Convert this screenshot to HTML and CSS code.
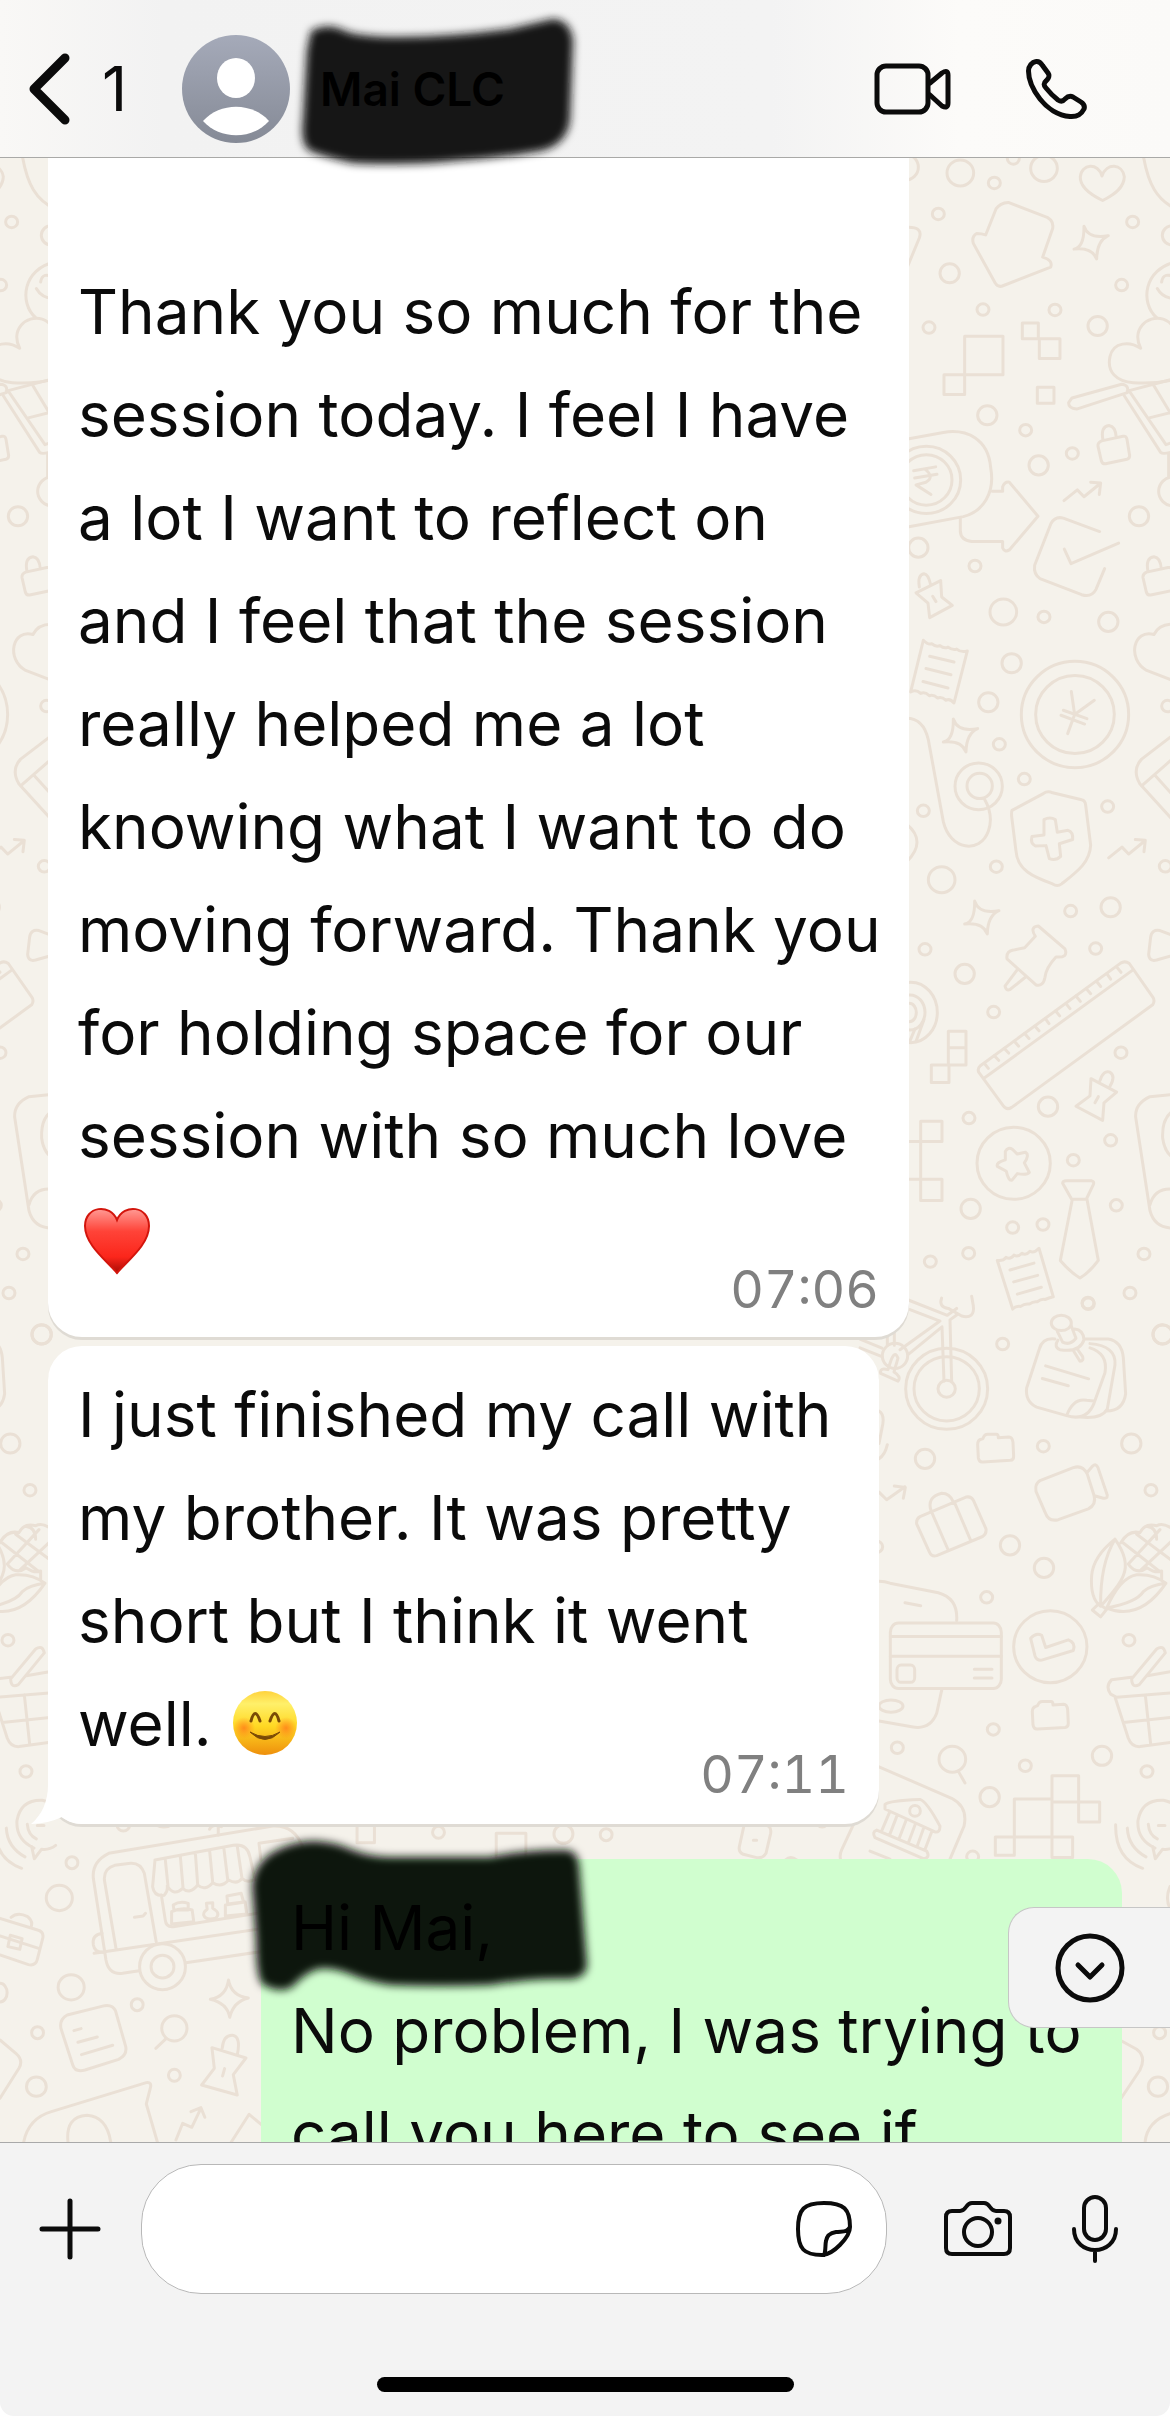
FILE: index.html
```
<!DOCTYPE html>
<html lang="en">
<head>
  <meta charset="UTF-8">
  <meta name="viewport" content="width=device-width, initial-scale=1.0">
  <title>Chat</title>
  <link rel="stylesheet" href="styles.css">
</head>
<body>

<!-- HEADER -->
<header class="topbar">
  <button class="back" aria-label="Back">
    <svg width="48" height="76" viewBox="26 49 48 76"><path d="M65 56L34 87L65 118" stroke-width="9"/></svg>
    <span>1</span>
  </button>
  <svg class="avatar" viewBox="0 0 108 108">
    <defs>
      <linearGradient id="avatar-bg" x1="0" y1="0" x2="0" y2="1">
        <stop offset="0" stop-color="#a5aab9"/>
        <stop offset="1" stop-color="#858a96"/>
      </linearGradient>
    </defs>
    <circle cx="54" cy="54" r="54" fill="url(#avatar-bg)"/>
    <ellipse cx="54" cy="43" rx="19" ry="20" fill="#fff"/>
    <path d="M21 86C38 67 70 67 87 86C70 105 38 105 21 86Z" fill="#fff"/>
  </svg>
  <div class="contact">
    <svg class="scribble scribble-name" width="300" height="170" viewBox="290 10 300 170">
      <defs><filter id="soft"><feGaussianBlur stdDeviation="4"/></filter></defs>
      <path filter="url(#soft)" d="M311 31Q328 22 345 31Q360 37 400 37Q450 37 510 29Q540 22 553 19Q570 20 573 40L570 120Q567 145 540 151Q500 158 430 163Q380 165 352 163Q325 157 310 151Q300 145 303 120L307 50Z"/>
    </svg>
    <h1 class="name">Mai CLC</h1>
  </div>
  <div class="calls">
    <button aria-label="Video call">
      <svg width="80" height="60" viewBox="872 58 80 60">
        <rect x="877" y="65" width="51" height="46" rx="9" stroke-width="5"/>
        <path d="M930 82L942 72Q948 68 948 74V102Q948 108 942 105L930 94" stroke-width="5"/>
      </svg>
    </button>
    <button aria-label="Call">
      <svg width="64" height="64" viewBox="1024 56 64 64">
        <path stroke-width="5" d="M1028.500 70C1028.500 65 1032 61 1036 60.500C1039 60 1041 62 1042.500 64.500L1048 72C1050 75 1049 77 1046 80C1043.500 82 1043.500 84 1046 87C1050 92 1054 96 1058 99C1061 101 1063 100.500 1065 98C1068 95 1070 94.500 1073 96L1081 101C1084 103 1085 105 1084 108C1081 114 1076 116 1070 115.500C1058 114.500 1047 107 1040 98C1033 89 1028.500 80 1028.500 70Z"/>
      </svg>
    </button>
  </div>
</header>

<!-- CHAT -->
<main class="chat">
  <svg class="wallpaper" viewBox="0 158 1170 1984" preserveAspectRatio="xMidYMin slice" aria-hidden="true">
    <defs>
      <ellipse id="s" rx="18" ry="15"/>
      <ellipse id="m" rx="29" ry="25"/>
      <ellipse id="l" rx="40" ry="34"/>
      <path id="star" d="M-23 -43Q-10 -8 50 -18Q16 -5 15 43Q2 12 -53 17Q-22 12 -23 -43Z"/>
      <path id="lock" d="M-32 -10L32 -22Q42 -24 44 -14L52 28Q52 36 44 38L-20 50Q-30 51 -33 42L-43 4Q-44 -6 -32 -10ZM-28 -12Q-36 -48 -10 -50Q10 -48 12 -18"/>
      <path id="trend" d="M-58 22L-18 -6L2 12L50 -22M22 -26L52 -24L48 6"/>
      <path id="folder" d="M-38 -26Q-34 -37 -24 -37H2Q8 -37 8 -28L40 -30Q50 -30 52 -16L54 20Q54 30 44 31L-38 35Q-50 36 -52 24L-54 -10Q-54 -22 -44 -24Z"/>
    </defs>

    <g id="right-side">
      <!-- upper part -->
      <g transform="translate(880 150) scale(.3333 .3827)">
        <use href="#l" x="75" y="45"/><use href="#l" x="241" y="60"/><use href="#l" x="492" y="48"/><use href="#l" x="370" y="1207"/>
        <use href="#s" x="343" y="86"/><use href="#s" x="400" y="22"/><use href="#s" x="175" y="167"/><use href="#s" x="758" y="188"/>
        <use href="#s" x="725" y="353"/><use href="#s" x="309" y="417"/><use href="#s" x="525" y="418"/><use href="#s" x="147" y="464"/>
        <use href="#s" x="437" y="732"/><use href="#s" x="577" y="793"/><use href="#s" x="285" y="1087"/><use href="#s" x="492" y="1220"/>
        <use href="#s" x="358" y="1553"/><use href="#s" x="863" y="1453"/>
        <use href="#m" x="209" y="322"/><use href="#m" x="653" y="460"/><use href="#m" x="322" y="693"/><use href="#m" x="476" y="824"/>
        <use href="#m" x="777" y="957"/><use href="#m" x="115" y="1039"/><use href="#m" x="685" y="1233"/><use href="#m" x="395" y="1341"/>
        <use href="#m" x="325" y="1443"/><use href="#m" x="876" y="223"/>
        <path d="M668 132C620 112 600 92 601 70C604 36 655 32 666 68C680 32 728 36 733 70C732 96 710 114 668 132Z"/>
        <path d="M790 15C805 90 830 130 890 155"/>
        <path d="M80 202Q130 200 118 230L80 310"/>
        <path d="M317 222L348 154Q360 138 385 137L490 172Q523 180 518 205L488 280Q520 288 512 306L365 356Q352 358 346 348L280 244Q274 226 290 218Q305 218 317 222Z"/>
        <use href="#star" x="635" y="242"/>
        <use href="#star" x="243" y="1530"/>
        <path d="M254 487H369V587H254ZM192 587H254V639H192ZM427 452H475V493H427ZM478 493H540V545H478ZM472 620H522V662H472Z"/>
        <path d="M83 755L190 738C260 728 325 755 332 830C346 895 310 945 250 958L83 985"/>
        <ellipse cx="139" cy="862" rx="103" ry="88"/><ellipse cx="139" cy="862" rx="77" ry="66"/>
        <path d="M101 838L167 828M104 857L171 847M135 834Q165 855 138 868L108 875L153 900"/>
        <path d="M337 892H368V880Q374 866 388 868L474 957L388 1045Q374 1052 368 1040V1023H275Q242 1020 241 996V962"/>
        <path d="M659 997L550 962Q526 956 513 976L464 1085Q460 1108 480 1120L605 1162Q635 1170 648 1148L674 1094M553 1043L573 1081L716 1027"/>
        <path d="M830 438C780 400 790 310 890 292M890 335Q850 315 845 345M832 362Q850 390 890 388"/>
        <path d="M782 518C755 470 800 430 850 442Q890 455 890 500M782 518C750 500 700 500 690 540C680 580 710 605 760 608Q830 612 890 598"/>
        <path d="M576 648L725 612Q748 614 742 634L590 677Q565 675 566 660ZM742 630L890 596M733 642L842 790Q850 797 890 785M748 630L858 770L890 760M822 616L880 700M808 700L890 682M866 794V855"/>
        <ellipse cx="880" cy="892" rx="44" ry="38"/>
        <use href="#lock" x="697" y="770"/><use href="#lock" x="832" y="1113"/>
        <use href="#trend" x="610" y="894"/>
        <path d="M108 1157L182 1125L185 1168L217 1190L149 1222L144 1184ZM118 1142Q112 1110 132 1107Q145 1108 152 1136M158 1166L168 1180"/>
        <path d="M130 1281Q145 1294 155 1290Q168 1300 180 1295Q192 1304 204 1299Q218 1308 230 1304Q244 1314 262 1309L222 1445Q210 1432 198 1438Q185 1428 173 1432Q160 1422 148 1426Q135 1415 122 1420Q108 1408 92 1416ZM149 1323L222 1338M138 1355L213 1371M129 1389L204 1406"/>
        <ellipse cx="585" cy="1475" rx="161" ry="139"/><ellipse cx="585" cy="1475" rx="118" ry="102"/>
        <path d="M574 1415L584 1475L643 1438M584 1475L563 1525M550 1464L621 1486M543 1477L614 1500"/>
        <path d="M890 1390L800 1360C740 1330 760 1250 822 1266Q840 1235 890 1240"/>
        <path d="M80 1485Q130 1485 145 1541L190 1755C210 1830 300 1840 325 1780Q342 1740 313 1695"/>
      </g>

      <!-- middle part -->
      <g transform="translate(880 740) scale(.3333 .3827)">
        <use href="#s" x="433" y="102"/><use href="#s" x="683" y="174"/><use href="#s" x="130" y="185"/><use href="#s" x="349" y="331"/>
        <use href="#s" x="856" y="330"/><use href="#s" x="572" y="447"/><use href="#s" x="135" y="547"/><use href="#s" x="647" y="545"/>
        <use href="#s" x="341" y="711"/><use href="#s" x="723" y="817"/><use href="#s" x="267" y="988"/><use href="#s" x="692" y="1046"/>
        <use href="#s" x="580" y="1098"/><use href="#s" x="709" y="1216"/><use href="#s" x="398" y="1274"/><use href="#s" x="489" y="1266"/>
        <use href="#s" x="266" y="1341"/><use href="#s" x="151" y="1363"/><use href="#s" x="792" y="1343"/><use href="#s" x="750" y="1445"/><use href="#s" x="624" y="1471"/>
        <use href="#m" x="692" y="437"/><use href="#m" x="254" y="611"/><use href="#m" x="504" y="958"/><use href="#m" x="272" y="1225"/>
        <use href="#m" x="848" y="1553"/><use href="#l" x="185" y="365"/>
        <ellipse cx="296" cy="121" rx="71" ry="61"/><ellipse cx="299" cy="120" rx="38" ry="33"/>
        <path d="M80 220Q142 265 80 318"/>
        <path d="M396 184L490 140Q503 132 518 138L605 156Q616 158 617 170L632 275C630 320 590 345 545 376Q532 384 518 376C460 358 412 340 408 290L395 200Q394 188 396 184Z"/>
        <path d="M492 208Q510 200 526 208L532 241L564 236Q580 240 578 260L538 271L542 304Q528 316 508 310L498 276L466 277Q450 270 456 252L492 248Z"/>
        <use href="#trend" x="744" y="286"/><use href="#star" x="307" y="464"/>
        <path d="M890 -20L785 50Q755 78 780 115L890 220M785 120L890 40M825 92L890 155"/>
        <path d="M466 513Q448 488 475 486L555 546Q566 570 528 567Q498 595 495 620Q490 645 468 640L381 572Q378 552 400 549L434 543ZM412 600L375 643Q378 656 390 652L436 620"/>
        <path d="M722 583Q735 576 748 584L820 674Q825 684 818 692L395 960Q380 968 370 956L296 868Q292 858 300 852ZM312 884L757 602"/>
        <path d="M314 846L325 858M343 825L356 837M373 806L386 818M403 787L416 800M434 767L447 780M465 748L477 760M496 728L507 741M527 708L539 721M558 689L570 702M588 669L601 683M619 650L632 663M650 631L662 644M681 611L692 625M711 594L723 607"/>
        <path d="M870 508L840 498Q815 494 812 515L806 560Q808 580 830 575L870 565"/>
        <ellipse cx="92" cy="712" rx="80" ry="79"/><ellipse cx="90" cy="712" rx="45" ry="46"/><ellipse cx="88" cy="712" rx="21" ry="24"/><path d="M132 730L108 788M105 755L88 790"/>
        <path d="M205 761H258V849H205ZM205 804H258M154 849H207V895H154ZM122 996H186V1049H80M122 996V1203H186V1148H80"/>
        <path d="M633 885L710 920L672 948L668 994L588 957L630 930ZM660 890Q670 862 690 868Q708 878 690 905M655 932L645 948"/>
        <ellipse cx="401" cy="1106" rx="110" ry="94"/>
        <path d="M376 1075Q384 1062 398 1070L412 1082L436 1077Q450 1084 433 1105L448 1130Q440 1138 412 1133L396 1150Q386 1154 379 1127L352 1114Q348 1104 376 1097Z"/>
        <path d="M890 925L810 932Q765 950 767 985L810 1230Q825 1280 890 1275M810 1215Q825 1165 890 1175M890 965Q845 980 848 1040Q855 1085 890 1095"/>
        <path d="M548 1158Q548 1152 560 1152H635Q644 1154 640 1162L619 1200H575ZM577 1200L541 1360Q570 1390 600 1406Q630 1390 655 1360L621 1200"/>
        <path d="M352 1360Q370 1362 378 1352Q392 1358 402 1346Q414 1352 426 1341Q438 1348 450 1336Q462 1342 477 1328L520 1455Q506 1458 495 1462Q484 1460 472 1468Q460 1466 448 1474Q434 1472 422 1480Q408 1478 398 1487ZM390 1385L462 1367M401 1416L473 1399M412 1448L484 1430"/>
      </g>

      <!-- lower part -->
      <g transform="translate(860 1300) scale(.3333 .3827)">
        <use href="#s" x="685" y="10"/><use href="#s" x="428" y="115"/><use href="#s" x="550" y="382"/><use href="#s" x="873" y="497"/>
        <use href="#s" x="50" y="645"/><use href="#s" x="380" y="777"/><use href="#s" x="807" y="889"/><use href="#s" x="400" y="1122"/>
        <use href="#s" x="112" y="1170"/><use href="#s" x="496" y="1217"/><use href="#s" x="861" y="1232"/><use href="#s" x="338" y="1455"/>
        <use href="#m" x="908" y="90"/><use href="#m" x="195" y="415"/><use href="#m" x="814" y="375"/><use href="#m" x="450" y="641"/>
        <use href="#m" x="552" y="700"/><use href="#m" x="726" y="1191"/><use href="#m" x="389" y="1299"/>
        <ellipse cx="260" cy="232" rx="123" ry="106"/><ellipse cx="260" cy="232" rx="98" ry="84"/><ellipse cx="260" cy="232" rx="26" ry="22"/>
        <path d="M252 212L246 70L145 142M275 212L270 52L292 38M145 0L262 40L290 22M0 102L66 126M0 125L66 148M240 55L120 130M150 25L240 55M82 95V118M103 80V118"/>
        <ellipse cx="105" cy="146" rx="38" ry="33"/>
        <path d="M92 160Q105 130 114 152L102 188Q125 200 114 212L62 192Q58 176 84 182ZM245 -5Q235 18 265 22L305 42Q345 50 340 15L335 -10"/>
        <path d="M585 102Q548 98 538 128L500 230Q495 265 530 280L620 302Q680 318 702 270L735 190Q745 140 690 125M675 102H745Q785 108 790 150L797 245Q790 290 740 290M690 114Q770 120 765 170L742 285Q725 312 660 306M620 302Q640 255 680 262L702 264M557 172L686 206M547 205L625 224"/>
        <ellipse cx="604" cy="60" rx="30" ry="20"/><path d="M592 82L608 110Q630 120 648 100L634 68M594 105Q580 122 600 130Q660 138 672 104Q670 78 644 76M640 132L660 160Q672 160 668 148L652 128"/>
        <use href="#folder" x="407" y="388"/><use href="#folder" x="571" y="1086"/>
        <path d="M540 472L640 438Q668 430 682 455L702 510Q710 535 685 546L595 574Q565 580 556 556L528 500Q524 480 540 472ZM680 452L698 434Q708 426 714 438L742 510Q742 520 730 518L706 512"/>
        <path d="M180 566L318 515Q334 512 341 525L378 598Q380 612 368 618L230 668Q215 672 208 658L170 585Q168 572 180 566ZM216 556L264 652M284 530L332 628M213 550Q200 515 245 505Q270 505 280 528"/>
        <path d="M57 735Q75 735 90 740L235 765Q295 780 290 838M135 791L182 799M57 1100L155 1115Q210 1125 230 1080L245 1020M57 415Q75 405 82 378M57 290Q76 300 66 335L57 375M57 502L80 522L135 488M103 486L136 490L130 518"/>
        <rect x="91" y="844" width="333" height="171" rx="24"/><path d="M91 879H424M91 931H424M343 965H396M343 988H396"/><rect x="111" y="954" width="53" height="45" rx="12"/>
        <ellipse cx="93" cy="1061" rx="36" ry="16"/>
        <ellipse cx="571" cy="906" rx="110" ry="94"/><path d="M512 884Q528 868 545 876L557 908L625 888Q648 895 640 916L545 941Q530 942 525 930Z"/>
        <path d="M722 800Q690 780 695 720Q700 670 765 625Q810 680 790 720Q780 745 722 800ZM722 800Q720 690 765 625M740 805Q780 725 830 718Q880 715 918 740Q840 840 740 805ZM740 805Q830 790 850 762Q870 745 918 740M697 810L716 794L740 808L722 828Z"/>
        <path d="M782 635Q805 600 840 608Q855 582 890 590Q910 580 940 600M790 635L900 710M830 612L935 680M805 690L900 600M840 708L935 630M805 690Q830 720 862 700Q888 715 905 708V730M862 592Q890 595 890 625"/>
        <path d="M820 985L755 992Q735 1010 752 1030L770 1038L940 1026M862 982L940 970M766 1040L805 1145Q815 1168 840 1167L940 1155M790 1104L940 1090M856 1032L872 1160M815 990L890 912Q910 900 916 922L838 1005Q815 1015 815 990Z"/>
        <ellipse cx="277" cy="1200" rx="40" ry="34"/><path d="M296 1233L315 1262"/>
        <path d="M57 1220L275 1302Q325 1325 312 1375L270 1461"/>
        <path d="M75 1318Q85 1308 180 1305Q200 1310 240 1375Q240 1392 225 1390L75 1330ZM50 1385L200 1440Q212 1458 190 1460L45 1405Q35 1390 50 1385ZM88 1340L66 1385M110 1350L90 1395M138 1360L118 1406M165 1372L146 1416M190 1382L172 1426M214 1392L195 1436M30 1440L90 1461"/><ellipse cx="165" cy="1335" rx="16" ry="14"/>
        <path d="M463 1304H576V1403H463ZM576 1243H656V1312H576ZM656 1312H719V1364H656ZM406 1403H463V1451H406ZM576 1403H638V1457H576ZM576 1312V1403M463 1403V1451"/>
        <path d="M885 1432Q830 1410 834 1360Q845 1305 910 1307Q945 1312 960 1340M878 1428L886 1460L908 1435Q930 1438 950 1425M865 1370Q868 1398 892 1408M802 1380Q805 1430 858 1455M767 1371Q765 1460 848 1485M895 1373H915"/>
      </g>
    </g>
    <use href="#right-side" x="-1121"/>

    <!-- strip between the bubbles -->
    <g transform="translate(700 1680) scale(.3333)">
      <path d="M133 432Q140 425 190 432Q216 436 212 460L198 520Q190 535 170 533L130 523Q115 516 118 500ZM462 430L425 510Q418 525 422 540M350 432Q366 450 384 432M160 481H170M256 540Q272 525 290 540"/>
      <circle cx="1379" cy="1058" r="18"/><circle cx="1374" cy="1220" r="29"/>
      <path d="M1250 1075L1310 1108Q1340 1130 1320 1170L1250 1275M1335 1390Q1340 1320 1420 1298M1410 620Q1395 655 1410 685"/>
    </g>

    <!-- bottom left -->
    <g transform="translate(0 1780) scale(.3954 .3333)">
      <ellipse cx="312" cy="135" rx="16" ry="18"/><ellipse cx="182" cy="248" rx="15" ry="18"/><ellipse cx="150" cy="354" rx="33" ry="38"/><ellipse cx="180" cy="622" rx="33" ry="38"/>
      <ellipse cx="347" cy="674" rx="15" ry="18"/><ellipse cx="95" cy="758" rx="15" ry="18"/><ellipse cx="92" cy="920" rx="25" ry="29"/><ellipse cx="441" cy="886" rx="15" ry="18"/>
      <ellipse cx="1109" cy="157" rx="15" ry="18"/><ellipse cx="1425" cy="162" rx="24" ry="28"/><ellipse cx="1533" cy="164" rx="15" ry="18"/><ellipse cx="0" cy="638" rx="18" ry="28"/>
      <path d="M390 132Q415 150 438 132M903 134H947V188H903ZM945 132H1005M1255 230V160H1330V230M530 148Q535 130 560 140M552 138V165"/>
      <path d="M275 220L690 138Q745 135 765 200M275 220Q232 245 236 295L268 540Q275 585 310 580L352 572M470 548L660 515M238 520L650 448M395 485L365 280Q355 248 330 250L290 256Q262 265 264 300L294 510"/>
      <path d="M392 240L590 196Q625 190 632 230L645 300M392 240L386 320Q390 350 415 346Q425 335 423 318Q440 350 462 325Q480 345 500 315Q518 335 538 308Q560 325 578 300Q600 315 612 295Q625 310 640 300M418 238L425 320M456 228L463 325M494 218L500 315M530 210L538 308M566 203L576 300M600 198L612 295M408 345L418 420Q420 442 438 440L650 400M655 190L740 175M655 190L660 240M340 412L362 408L368 400"/>
      <path d="M434 395Q460 380 486 390L490 425L434 432ZM438 375Q455 362 476 370V390H440ZM522 370L538 368V385Q560 400 545 415Q520 422 515 405Q515 395 524 388ZM574 348L610 340L616 366L576 372ZM570 375L620 366L624 402L570 408Z"/>
      <ellipse cx="411" cy="560" rx="58" ry="69"/><ellipse cx="411" cy="560" rx="29" ry="34"/><path d="M258 460Q232 465 236 495Q240 520 265 516"/>
      <path d="M0 415L95 450Q112 455 108 475L94 540Q90 558 72 554L0 525M28 412Q45 395 70 410Q85 425 78 442M0 468L98 505M26 466L56 476L50 508L20 500Z"/>
      <path d="M578 600Q585 648 628 654Q590 665 581 712Q575 670 532 658Q572 650 578 600Z"/>
      <path d="M170 705L265 677Q285 674 292 692L318 800Q322 825 300 838L215 870Q190 878 184 855L154 745Q150 718 170 705ZM187 752L205 746M197 787L246 771M206 824L285 796"/>
      <ellipse cx="441" cy="745" rx="32" ry="38"/><path d="M420 776L394 805"/>
      <path d="M536 803L622 834L590 884L600 945L510 915L542 865ZM562 805Q565 765 588 766Q610 770 600 825M568 866L563 888M0 780L40 820Q60 840 48 865L0 955"/>
      <path d="M60 1086Q72 1015 130 995L370 908Q385 905 380 925L370 972L398 1086M172 1086Q165 1010 220 1006Q270 1010 280 1086M445 1080L462 1030L485 1042L508 985M483 995L508 983L518 1012M585 1086L630 1003L662 1035"/>
    </g>
  </svg>

  <article class="bubble incoming first">
    <p>Thank you so much for the<br>session today. I feel I have<br>a lot I want to reflect on<br>and I feel that the session<br>really helped me a lot<br>knowing what I want to do<br>moving forward. Thank you<br>for holding space for our<br>session with so much love<br>
      <svg class="emoji" viewBox="-3 -2 72 72" role="img" aria-label="red heart">
        <defs>
          <linearGradient id="heart-bg" x1="0" y1="0" x2="0" y2="1">
            <stop offset="0" stop-color="#ff9a94"/><stop offset=".35" stop-color="#ff4338"/><stop offset=".75" stop-color="#fb261b"/><stop offset="1" stop-color="#a80b05"/>
          </linearGradient>
        </defs>
        <path d="M36 68C26 56 4 40 4 21C4 1 29 -2 36 15C43 -2 68 1 68 21C68 40 46 56 36 68Z" fill="url(#heart-bg)" stroke="#d3150c" stroke-width="2"/>
      </svg>
    </p>
    <time>07:06</time>
  </article>

  <article class="bubble incoming second">
    <p>I just finished my call with<br>my brother. It was pretty<br>short but I think it went<br>well.
      <svg class="emoji" viewBox="0 1 72 72" role="img" aria-label="smiling face">
        <defs>
          <linearGradient id="face-bg" x1="0" y1="0" x2="0" y2="1">
            <stop offset="0" stop-color="#ffd23c"/><stop offset=".2" stop-color="#fff06a"/><stop offset=".55" stop-color="#ffd823"/><stop offset="1" stop-color="#ee8f0c"/>
          </linearGradient>
          <radialGradient id="cheek"><stop offset="0" stop-color="#ff7a1a" stop-opacity=".8"/><stop offset="1" stop-color="#ff7a1a" stop-opacity="0"/></radialGradient>
        </defs>
        <circle cx="36" cy="36" r="32" fill="url(#face-bg)"/>
        <circle cx="15" cy="41" r="11" fill="url(#cheek)"/><circle cx="57" cy="41" r="11" fill="url(#cheek)"/>
        <path d="M22 34Q26 19 31 34M41 34Q46 19 50 34" fill="none" stroke="#7a4a06" stroke-width="3" stroke-linecap="round"/>
        <path d="M21 45Q36 60 51 45Q36 54 21 45Z" fill="#7a4a06" stroke="#7a4a06" stroke-width="1"/>
      </svg>
    </p>
    <time>07:11</time>
    <svg class="tail" width="52" height="44" viewBox="0 0 52 44"><path d="M17 0C17 16 11 30 0 39Q16 39 31 32Q40 39 52 39V0Z"/></svg>
  </article>

  <article class="bubble outgoing">
    <svg class="scribble scribble-greeting" width="370" height="180" viewBox="235 1825 370 180">
      <path filter="url(#soft)" d="M252 1885Q254 1866 270 1854Q290 1841 315 1841Q335 1842 350 1849Q370 1857 390 1857H490Q520 1850 565 1850Q577 1850 579 1865L587 1965Q586 1978 570 1979Q530 1978 490 1985Q440 1987 390 1985Q365 1981 350 1974Q330 1967 318 1969Q305 1973 292 1987Q280 1994 262 1984Q256 1975 256 1940Z"/>
    </svg>
    <p><span class="greeting">Hi Mai,</span><br>No problem, I was trying to<br>call you here to see if</p>
  </article>

  <button class="scroll-down" aria-label="Scroll to latest">
    <svg width="70" height="70" viewBox="0 0 70 70">
      <circle cx="35" cy="35" r="32" stroke-width="5"/>
      <path d="M23 32L35 44L47 32" stroke-width="5"/>
    </svg>
  </button>
</main>

<!-- MESSAGE BAR -->
<footer class="composer">
  <div class="composer-row">
    <button aria-label="Attach">
      <svg width="64" height="64" viewBox="0 0 64 64"><path d="M32 4V60M4 32H60" stroke-width="5"/></svg>
    </button>
    <div class="field">
      <input type="text" aria-label="Message">
      <button aria-label="Stickers">
        <svg width="60" height="60" viewBox="0 0 60 60">
          <path stroke-width="4" d="M28 56C10 56 4 50 4 30C4 10 10 4 30 4C50 4 56 10 56 28C56 38 39 56 28 56ZM30 56C32 52 31 46 32 42C33 36 36 34 42 33C48 32 53 34 56 28"/>
        </svg>
      </button>
    </div>
    <button aria-label="Camera">
      <svg width="72" height="60" viewBox="0 0 72 60">
        <path stroke-width="4" d="M10 12H18C21 12 22 11 24 8C26 5 27 4 30 4H42C45 4 46 5 48 8C50 11 51 12 54 12H62Q68 12 68 18V49Q68 55 62 55H10Q4 55 4 49V18Q4 12 10 12Z"/>
        <circle cx="36" cy="33" r="14" stroke-width="4"/><circle cx="56" cy="22" r="3.500" fill="#0b0b0b" stroke="none"/>
      </svg>
    </button>
    <button aria-label="Voice message">
      <svg width="50" height="72" viewBox="0 0 50 72">
        <rect x="14" y="4" width="22" height="43" rx="11" stroke-width="4"/>
        <path d="M4 36C4 64 46 64 46 36M25 58V68" stroke-width="4"/>
      </svg>
    </button>
  </div>
  <div class="home-bar"></div>
</footer>

</body>
</html>
```
FILE: styles.css
```
* { box-sizing: border-box; }
body {
  margin: 0;
  height: 100vh;
  display: flex;
  flex-direction: column;
  background: #fff;
  color: #0b0b0b;
  font-family: Inter, "Liberation Sans", sans-serif;
}
button { flex: none; margin: 0; padding: 0; border: 0; background: none; color: inherit; font: inherit; display: flex; align-items: center; }
button svg { display: block; fill: none; stroke: #0b0b0b; stroke-linecap: round; stroke-linejoin: round; }
p, h1 { margin: 0; }

/* HEADER */
.topbar {
  position: relative;
  z-index: 2;
  flex: none;
  height: 158px;
  padding: 20px 82px 0 26px;
  display: flex;
  align-items: center;
  border-bottom: 1px solid #a9a9a7;
  background: linear-gradient(90deg, #f9f8f6, #f2f2f2 14%, #f3f3f3 66%, #fcfbf9 82%, #fbfaf8);
}
.back { width: 156px; gap: 28px; font-size: 62px; }
.avatar { width: 108px; height: 108px; }
.contact { position: relative; margin-left: 30px; }
.name { position: relative; font-size: 46px; line-height: 60px; font-weight: 600; color: #000; }
.calls { margin-left: auto; display: flex; align-items: center; gap: 72px; }

.scribble { position: absolute; fill: #121212; }
.scribble-name { left: -30px; top: -49px; }
.scribble-greeting { left: -26px; top: -34px; fill: #0e130f; }

/* CHAT */
.chat {
  position: relative;
  flex: 1;
  min-height: 0;
  overflow: hidden;
  padding: 0 48px;
  display: flex;
  flex-direction: column;
  background: #f5f2eb;
}
.wallpaper {
  position: absolute;
  left: 0;
  top: 0;
  width: 100%;
  height: 100%;
  fill: none;
  stroke: #eae0d5;
  stroke-width: 3px;
  stroke-linecap: round;
  stroke-linejoin: round;
}
.wallpaper path, .wallpaper ellipse, .wallpaper circle, .wallpaper rect { vector-effect: non-scaling-stroke; }

.bubble {
  position: relative;
  flex: none;
  display: flex;
  flex-direction: column;
  padding: 17px 30px 19px;
  border-radius: 34px;
  font-size: 62px;
  line-height: 103px;
  white-space: nowrap;
}
.bubble p { position: relative; }
.incoming { align-self: flex-start; background: #fff; box-shadow: 0 3px 0 #dfdbd4; }
.first { width: 861px; padding-top: 102px; padding-bottom: 17px; border-radius: 0 0 34px 34px; }
.second { width: 831px; margin-top: 9px; }
.outgoing { align-self: flex-end; width: 861px; margin-top: 35px; background: #d0fecf; }
.greeting { color: #000; }
.bubble time { position: relative; align-self: flex-end; margin-top: -30px; font-size: 52px; line-height: 60px; font-variant-numeric: tabular-nums; color: #808080; }
.emoji { width: 72px; height: 72px; vertical-align: -14px; }
.tail { position: absolute; left: -17px; bottom: -5px; fill: #fff; }

.scroll-down {
  position: absolute;
  right: 0;
  bottom: 114px;
  width: 162px;
  height: 121px;
  padding-left: 46px;
  border: 1px solid #c6c6c6;
  border-right: 0;
  border-radius: 26px 0 0 26px;
  background: #f3f3f3;
}

/* MESSAGE BAR */
.composer {
  flex: none;
  padding: 21px 0 24px;
  border-top: 1px solid #a9a9a9;
  border-radius: 0 0 14px 14px;
  background: #f3f3f3;
}
.composer-row { display: flex; align-items: center; padding: 0 50px 0 38px; }
.field {
  flex: 1;
  min-width: 0;
  height: 130px;
  margin: 0 55px 0 39px;
  padding: 0 32px 0 40px;
  display: flex;
  align-items: center;
  border: 1px solid #b8b8b8;
  border-radius: 60px;
  background: #fff;
}
.field input { flex: 1; min-width: 0; width: 100%; height: 100px; padding: 0; border: 0; outline: 0; background: none; font: inherit; font-size: 62px; }
.composer-row > button:last-child { margin-left: 56px; }
.home-bar { width: 417px; height: 15px; margin: 83px auto 0; border-radius: 8px; background: #000; }
```
